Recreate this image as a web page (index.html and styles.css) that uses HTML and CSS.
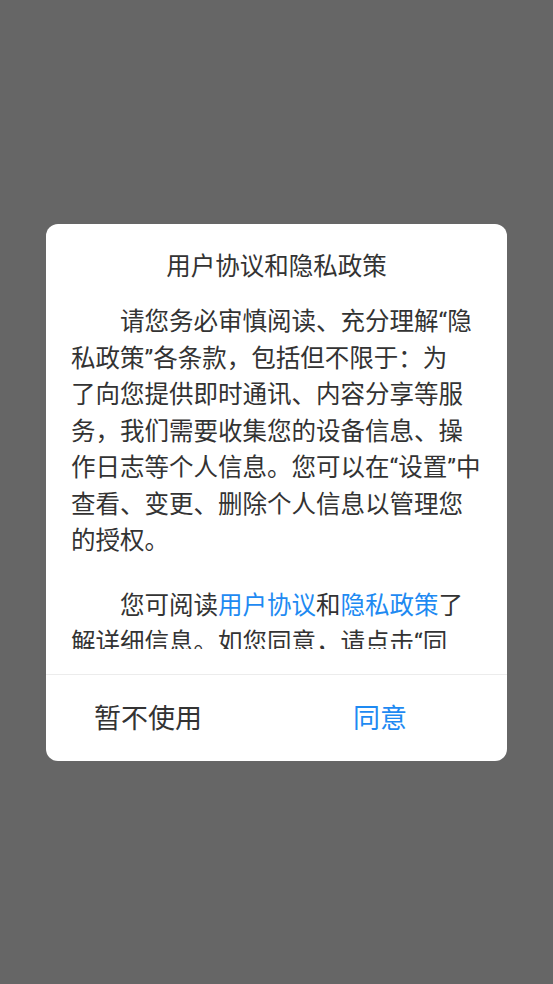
FILE: index.html
```html
<!DOCTYPE html>
<html lang="zh-CN">
<head>
<meta charset="utf-8">
<title>用户协议和隐私政策</title>
<link rel="stylesheet" href="styles.css">
</head>
<body>
<div class="overlay">
  <div class="dialog">
    <div class="dialog-title">用户协议和隐私政策</div>
    <div class="dialog-body">
      <p class="para">请您务必审慎阅读、充分理解“隐私政策”各条款，包括但不限于：为<br>了向您提供即时通讯、内容分享等服务，我们需要收集您的设备信息、操作日志等个人信息。您可以在“设置”中查看、变更、删除个人信息以管理您的授权。</p>
      <p class="para">您可阅读<span class="link">用户协议</span>和<span class="link">隐私政策</span>了解详细信息。如您同意，请点击“同意”，开始接受我们的服务。</p>
    </div>
    <div class="dialog-actions">
      <span class="btn btn-cancel">暂不使用</span>
      <span class="btn btn-ok">同意</span>
    </div>
  </div>
</div>
</body>
</html>
```

FILE: styles.css
```css
html, body {
  margin: 0;
  padding: 0;
}
body {
  background: #666666;
  font-family: "Roboto", "Noto Sans CJK SC", sans-serif;
  color: #333333;
}
.overlay {
  height: 984px;
  display: flex;
  align-items: center;
  justify-content: center;
}
.dialog {
  width: 461px;
  background: #ffffff;
  border-radius: 12px;
  overflow: hidden;
}
.dialog-title {
  padding-top: 25px;
  font-size: 24.5px;
  line-height: 36px;
  text-align: center;
  color: #333333;
}
.dialog-body {
  margin: 19.75px 25px 25px 25px;
  height: 344.25px;
  overflow: hidden;
  font-size: 24.5px;
  line-height: 36.5px;
  display: flex;
  flex-direction: column;
  gap: 28.5px;
}
.para {
  margin: 0;
  text-indent: 2em;
}
.link {
  color: #1e8af2;
}
.dialog-actions {
  border-top: 1px solid #ececec;
  height: 87px;
  box-sizing: border-box;
  display: flex;
  align-items: center;
  justify-content: space-between;
  padding: 3px 100px 0 48px;
}
.btn {
  font-size: 27px;
  line-height: 36px;
}
.btn-cancel {
  color: #333333;
}
.btn-ok {
  color: #1e8af2;
}
```
